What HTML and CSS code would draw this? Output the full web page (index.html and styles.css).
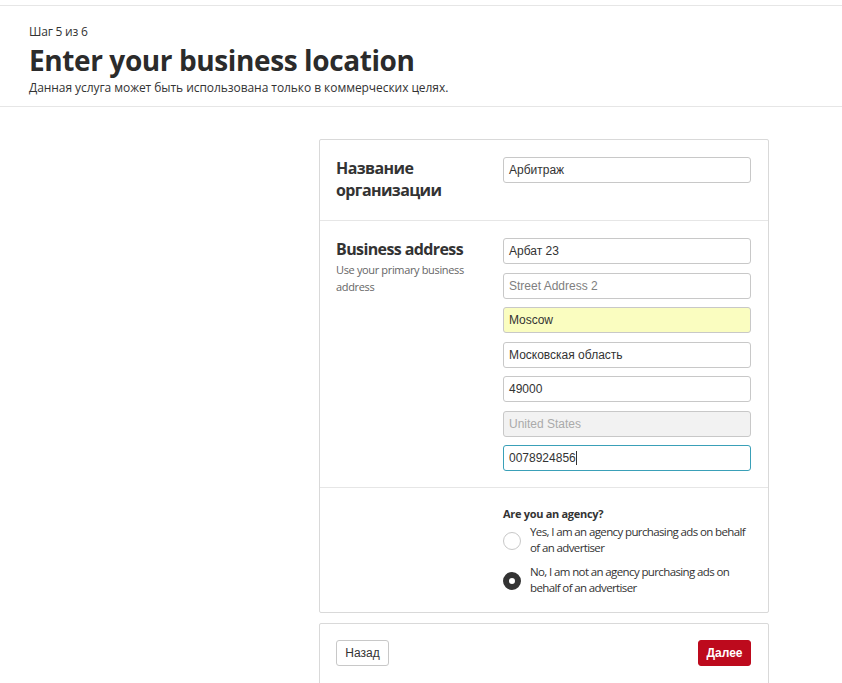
FILE: index.html
```html
<!DOCTYPE html>
<html>
<head>
<meta charset="utf-8">
<link rel="stylesheet" href="styles.css">
</head>
<body>
<div class="topline"></div>
<header class="head">
  <div class="step">Шаг 5 из 6</div>
  <h1 class="title">Enter your business location</h1>
  <div class="sub">Данная услуга может быть использована только в коммерческих целях.</div>
</header>
<main class="main">
  <div class="card">
    <div class="row row-name">
      <div class="label"><div class="ltitle">Название организации</div></div>
      <div class="fields">
        <div class="input">Арбитраж</div>
      </div>
    </div>
    <div class="row row-addr">
      <div class="label">
        <div class="ltitle">Business address</div>
        <div class="lhint">Use your primary business address</div>
      </div>
      <div class="fields">
        <div class="input">Арбат 23</div>
        <div class="input ph">Street Address 2</div>
        <div class="input auto">Moscow</div>
        <div class="input">Московская область</div>
        <div class="input">49000</div>
        <div class="input dis">United States</div>
        <div class="input focus">0078924856<span class="caret"></span></div>
      </div>
    </div>
    <div class="row row-agency">
      <div class="label"></div>
      <div class="fields">
        <div class="q">Are you an agency?</div>
        <div class="opt"><span class="radio"></span><span class="otext">Yes, I am an agency purchasing ads on behalf of an advertiser</span></div>
        <div class="opt"><span class="radio on"></span><span class="otext">No, I am not an agency purchasing ads on behalf of an advertiser</span></div>
      </div>
    </div>
  </div>
  <div class="card footer">
    <button class="btn back">Назад</button>
    <button class="btn next">Далее</button>
  </div>
</main>
</body>
</html>
```
FILE: styles.css
```css
html, body { margin: 0; padding: 0; background: #fff; }
body { font-family: "Open Sans", "Liberation Sans", sans-serif; color: #333; width: 842px; height: 683px; overflow: hidden; }
.topline { margin-top: 5px; height: 1px; background: #e6e6e6; }
.head { padding: 18px 29px 10px; border-bottom: 1px solid #e6e6e6; }
.step { font-size: 12px; line-height: 16px; color: #333; letter-spacing: -0.2px; }
.title { margin: 1px 0 0; font-size: 28px; line-height: 38px; font-weight: 700; color: #2b2b2b; letter-spacing: -0.4px; }
.sub { margin-top: 1px; font-size: 12px; line-height: 16px; letter-spacing: -0.06px; }
.main { padding: 32px 0 0 319px; width: 450px; }
.card { border: 1px solid #d9d9d9; border-radius: 2px; background: #fff; }
.row { display: flex; padding: 17px 17px 17px 16px; border-top: 1px solid #e6e6e6; }
.row:first-child { border-top: none; }
.row-name { padding-bottom: 17px; height: 46px; }
.row-addr { padding-top: 17px; padding-bottom: 16px; }
.row-agency { padding-top: 19px; padding-bottom: 16px; }
.label { width: 167px; flex: none; }
.ltitle { font-size: 16px; line-height: 22px; font-weight: 700; color: #333; width: 150px; letter-spacing: -0.6px; }
.lhint { font-size: 11px; line-height: 17px; color: #666; width: 135px; margin-top: 1px; letter-spacing: -0.35px; }
.fields { flex: 1; display: flex; flex-direction: column; gap: 8.5px; }
.input { box-sizing: border-box; height: 26px; border: 1px solid #c8c8c8; border-radius: 3px; padding: 0 5px; font-family: "Liberation Sans", Arial, sans-serif; font-size: 12px; line-height: 24px; color: #333; background: #fff; display: flex; align-items: center; }
.input.ph { color: #808080; }
.input.auto { background: #fafdc0; }
.input.dis { background: #f2f2f2; color: #aaa; }
.input.focus { border-color: #3aa0b8; }
.caret { display: inline-block; width: 1px; height: 14px; background: #333; }
.row-agency .fields { gap: 0; }
.q { font-size: 11px; font-weight: 700; line-height: 14px; margin-bottom: 3px; letter-spacing: -0.3px; }
.opt { display: flex; align-items: center; gap: 9px; margin-bottom: 8px; }
.opt:last-child { margin-bottom: 0; }
.radio { width: 18px; height: 18px; box-sizing: border-box; border-radius: 50%; border: 1px solid #c8c8c8; flex: none; background: #fff; margin-top: 2px; }
.radio.on { border: 6px solid #333; background: #fff; }
.otext { font-size: 11.5px; line-height: 16px; color: #333; letter-spacing: -0.62px; }
.footer { margin-top: 10px; display: flex; justify-content: space-between; padding: 16px 17px 20px 16px; height: 30px; }
.btn { height: 26px; border-radius: 3px; font-family: "Liberation Sans", Arial, sans-serif; font-size: 12px; padding: 0; cursor: pointer; }
.back { background: #fff; border: 1px solid #c8c8c8; color: #333; width: 53px; font-weight: 400; }
.next { background: #bd0a1d; border: 1px solid #bd0a1d; color: #fff; width: 53px; font-weight: 700; }
```
